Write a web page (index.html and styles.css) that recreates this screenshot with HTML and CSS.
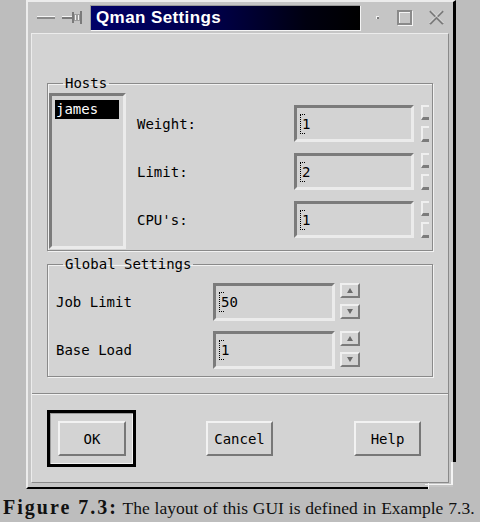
FILE: index.html
```html
<!DOCTYPE html>
<html lang="en">
<head>
    <meta charset="UTF-8">
    <title>Qman Settings</title>
    <link rel="stylesheet" href="styles.css">
</head>
<body>
    <div class="window">
        <div class="titlebar">
            <span class="tb-min"></span>
            <svg class="tb-pin" width="20" height="13" viewBox="0 0 20 13">
                <rect x="0" y="5" width="10" height="1" fill="#f4f4f4"/>
                <rect x="0" y="6" width="10" height="2" fill="#7a7a7a"/>
                <rect x="10" y="1" width="2" height="11" fill="#7a7a7a"/>
                <rect x="12" y="3" width="6" height="7" fill="#9c9c9c"/>
                <rect x="13" y="4" width="1" height="5" fill="#f4f4f4"/>
                <rect x="16" y="4" width="1" height="5" fill="#f4f4f4"/>
                <rect x="18" y="0" width="2" height="13" fill="#7a7a7a"/>
            </svg>
            <div class="tb-title">Qman Settings</div>
            <span class="tb-dot"></span>
            <span class="tb-max"></span>
            <svg class="tb-close" width="17" height="17" viewBox="0 0 17 17">
                <path d="M2 2 L15 15 M15 2 L2 15" stroke="#7a7a7a" stroke-width="2.2" fill="none"/>
                <path d="M3 1.5 L15.5 14 M14 1.5 L1.5 14" stroke="#f4f4f4" stroke-width="0.8" fill="none"/>
            </svg>
        </div>

        <div class="client">
            <fieldset class="group hosts">
                <legend>Hosts</legend>
                <div class="hosts-body">
                    <div class="listbox">
                        <div class="list-item selected">james</div>
                    </div>
                    <div class="host-form">
                        <label>Weight:</label>
                        <div class="entry"><span class="cursor"></span>1</div>
                        <div class="spin narrow"><span class="spin-btn"></span><span class="spin-btn"></span></div>

                        <label>Limit:</label>
                        <div class="entry"><span class="cursor"></span>2</div>
                        <div class="spin narrow"><span class="spin-btn"></span><span class="spin-btn"></span></div>

                        <label>CPU's:</label>
                        <div class="entry"><span class="cursor"></span>1</div>
                        <div class="spin narrow"><span class="spin-btn"></span><span class="spin-btn"></span></div>
                    </div>
                </div>
            </fieldset>

            <fieldset class="group global">
                <legend>Global Settings</legend>
                <div class="global-form">
                    <label>Job Limit</label>
                    <div class="entry"><span class="cursor"></span>50</div>
                    <div class="spin"><span class="spin-btn up"></span><span class="spin-btn down"></span></div>

                    <label>Base Load</label>
                    <div class="entry"><span class="cursor"></span>1</div>
                    <div class="spin"><span class="spin-btn up"></span><span class="spin-btn down"></span></div>
                </div>
            </fieldset>

            <div class="separator"></div>

            <div class="buttons">
                <div class="default-ring"><button class="btn">OK</button></div>
                <button class="btn cancel">Cancel</button>
                <button class="btn help">Help</button>
            </div>
        </div>
        <div class="resize-corner"></div>
    </div>

    <p class="caption"><b>Figure 7.3:</b> The layout of this GUI is defined in Example 7.3.</p>
</body>
</html>
```

FILE: styles.css
```css
* {
    box-sizing: border-box;
}

body {
    margin: 0;
    width: 480px;
    height: 522px;
    overflow: hidden;
    background: #bdbdbd;
    font-family: "DejaVu Sans Mono", monospace;
    font-size: 14px;
    color: #000;
}

/* window frame */
.window {
    position: relative;
    margin-left: 26px;
    width: 430px;
    height: 489px;
    background: #c5c5c5;
    border-top: 2px solid #ececec;
    border-left: 2px solid #ececec;
    border-right: 3px solid #000;
    border-bottom: 2px solid #000;
    padding: 0 4px 4px 3px;
}

.titlebar {
    height: 31px;
    display: flex;
    align-items: center;
    margin-left: -3px;
}

.tb-min {
    margin-left: 9px;
    width: 18px;
    height: 3px;
    background: #8a8a8a;
    border-top: 1px solid #f4f4f4;
}

.tb-pin {
    margin-left: 7px;
    display: block;
}

.tb-title {
    margin-left: 8px;
    margin-top: 1px;
    width: 271px;
    height: 26px;
    background: linear-gradient(to right, #000068 0%, #00004a 45%, #000010 80%, #000 100%);
    border-top: 1px solid #9a9a9a;
    border-left: 1px solid #9a9a9a;
    border-bottom: 1px solid #f4f4f4;
    border-right: 1px solid #f4f4f4;
    color: #fff;
    font-family: "Liberation Sans", Arial, sans-serif;
    font-weight: bold;
    font-size: 17px;
    letter-spacing: 0.4px;
    line-height: 24px;
    padding-left: 5px;
}

.tb-dot {
    margin-left: 15px;
    width: 3px;
    height: 3px;
    background: #7a7a7a;
    border-top: 1px solid #f4f4f4;
    border-left: 1px solid #f4f4f4;
}

.tb-max {
    margin-left: 18px;
    width: 15px;
    height: 15px;
    border: 2px solid #8a8a8a;
    box-shadow: inset 1px 1px 0 #f4f4f4, 1px 1px 0 #f4f4f4;
}

.tb-close {
    margin-left: 16px;
    display: block;
}

/* client area */
.client {
    width: 418px;
    height: 450px;
    background: #d3d3d3;
    border-top: 1px solid #ececec;
    border-left: 1px solid #ececec;
    border-right: 1px solid #8a8a8a;
    border-bottom: 1px solid #8a8a8a;
    padding: 41px 15px 0 15px;
}

.group {
    margin: 0;
    padding: 0;
    min-width: 0;
    border: 1px solid #8a8a8a;
    box-shadow: 1px 1px 0 #f2f2f2, inset 1px 1px 0 #f2f2f2;
}

.group legend {
    margin-left: 15px;
    padding: 0 2px;
    line-height: 16px;
}

.hosts-body {
    display: flex;
    padding: 2px 0 1px 1px;
}

.listbox {
    flex-shrink: 0;
    width: 77px;
    height: 156px;
    border-top: 3px solid #7b7b7b;
    border-left: 3px solid #7b7b7b;
    border-bottom: 3px solid #ebebeb;
    border-right: 3px solid #ebebeb;
    padding: 4px 4px 0 3px;
}

.list-item {
    height: 19px;
    line-height: 19px;
    padding-left: 1px;
}

.list-item.selected {
    background: #000;
    color: #fff;
}

.host-form {
    flex-shrink: 0;
    display: grid;
    grid-template-columns: 150px 120px 8px;
    grid-auto-rows: 37px;
    column-gap: 7px;
    row-gap: 11px;
    align-items: center;
    margin-left: 11px;
    padding-top: 12px;
}

.global-form {
    display: grid;
    grid-template-columns: 152px 122px 20px;
    grid-auto-rows: 38px;
    column-gap: 5px;
    row-gap: 10px;
    align-items: center;
    padding: 11px 0 7px 8px;
}

.entry {
    height: 100%;
    border-top: 3px solid #7b7b7b;
    border-left: 3px solid #7b7b7b;
    border-bottom: 3px solid #ebebeb;
    border-right: 3px solid #ebebeb;
    padding-left: 4px;
    display: flex;
    align-items: center;
}

.cursor {
    display: inline-block;
    width: 5px;
    height: 20px;
    margin-right: -4px;
    border-left: 1px dotted #000;
    border-top: 1px dotted #000;
    border-bottom: 1px dotted #000;
    position: relative;
    left: -1px;
}

.spin {
    align-self: start;
    display: flex;
    flex-direction: column;
    gap: 6px;
}

.spin-btn {
    display: block;
    height: 15px;
    border-top: 2px solid #efefef;
    border-left: 2px solid #efefef;
    border-bottom: 2px solid #7b7b7b;
    border-right: 2px solid #7b7b7b;
    position: relative;
}

.spin.narrow .spin-btn {
    border-right: none;
    border-bottom-width: 3px;
}

.spin.narrow .spin-btn + .spin-btn {
    height: 16px;
}

.spin-btn.up::after,
.spin-btn.down::after {
    content: "";
    position: absolute;
    left: 5px;
    top: 3px;
    border-left: 3px solid transparent;
    border-right: 3px solid transparent;
}

.spin-btn.up::after {
    border-bottom: 5px solid #6a6a6a;
}

.spin-btn.down::after {
    border-top: 5px solid #6a6a6a;
}

.global {
    margin-top: 5px;
}

.separator {
    margin: 16px -15px 0;
    height: 2px;
    border-top: 1px solid #8a8a8a;
    border-bottom: 1px solid #f2f2f2;
}

.buttons {
    display: flex;
    align-items: center;
    margin-top: 15px;
}

.default-ring {
    width: 89px;
    height: 57px;
    border: 3px solid #000;
    padding: 8px 7px 8px 8px;
    box-shadow: inset 1px 1px 0 #9a9a9a, inset -1px -1px 0 #f2f2f2;
}

.btn {
    width: 68px;
    height: 35px;
    margin: 0;
    padding: 0;
    background: #d3d3d3;
    border-top: 2px solid #f2f2f2;
    border-left: 2px solid #f2f2f2;
    border-bottom: 2px solid #777;
    border-right: 2px solid #777;
    font-family: "DejaVu Sans Mono", monospace;
    font-size: 14px;
    color: #000;
}

.btn.cancel {
    width: 67px;
    margin-left: 70px;
}

.btn.help {
    width: 67px;
    margin-left: 81px;
}

/* resize handle at the frame corner */
.resize-corner {
    position: absolute;
    right: -3px;
    bottom: -2px;
    width: 28px;
    height: 27px;
    border-right: 3px solid #bdbdbd;
    border-bottom: 2px solid #bdbdbd;
}

.resize-corner::before {
    content: "";
    position: absolute;
    right: 0;
    top: 0;
    width: 26px;
    height: 22px;
    border-right: 2px solid #f4f4f4;
    border-bottom: 1px solid #f4f4f4;
}

.resize-corner::after {
    content: "";
    position: absolute;
    left: 0;
    bottom: -2px;
    width: 1px;
    height: 6px;
    background: #f4f4f4;
}

.caption {
    margin: 8px 0 0 3px;
    font-family: "Liberation Serif", "Times New Roman", serif;
    font-size: 17.5px;
    line-height: 20px;
    word-spacing: 0.5px;
    color: #111;
    white-space: nowrap;
}

.caption b {
    font-size: 20px;
    letter-spacing: 2px;
    word-spacing: 0;
}
```
